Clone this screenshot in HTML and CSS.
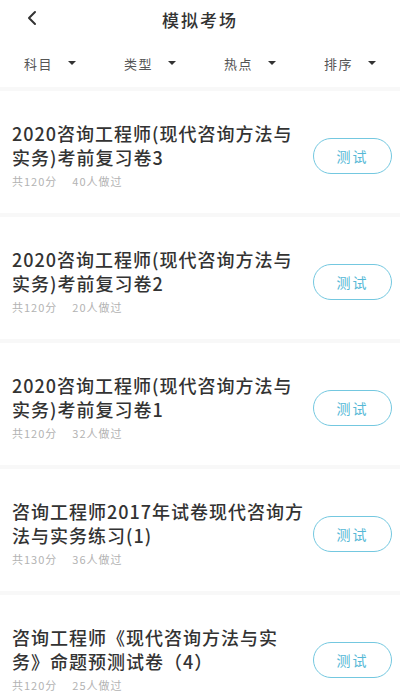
FILE: index.html
```html
<!DOCTYPE html>
<html lang="zh-CN">
<head>
  <meta charset="UTF-8" />
  <meta name="viewport" content="width=device-width, initial-scale=1.0"/>
  <title>模拟考场</title>
  <link rel="stylesheet" href="styles.css">
</head>
<body>
  <header class="topbar">
    <a class="back" href="#">
      <svg width="12" height="16" viewBox="0 0 12 16"><polyline points="9,2 3,8 9,14" fill="none" stroke="#333" stroke-width="2" stroke-linecap="round" stroke-linejoin="round"/></svg>
    </a>
    <h1>模拟考场</h1>
  </header>

  <nav class="filters">
    <div class="filter"><span>科目</span><i class="caret"></i></div>
    <div class="filter"><span>类型</span><i class="caret"></i></div>
    <div class="filter"><span>热点</span><i class="caret"></i></div>
    <div class="filter"><span>排序</span><i class="caret"></i></div>
  </nav>

  <ul class="list">
    <li class="item">
      <div class="info">
        <h2>2020咨询工程师(现代咨询方法与实务)考前复习卷3</h2>
        <p class="meta"><span>共120分</span><span>40人做过</span></p>
      </div>
      <button class="btn">测试</button>
    </li>
    <li class="item">
      <div class="info">
        <h2>2020咨询工程师(现代咨询方法与实务)考前复习卷2</h2>
        <p class="meta"><span>共120分</span><span>20人做过</span></p>
      </div>
      <button class="btn">测试</button>
    </li>
    <li class="item">
      <div class="info">
        <h2>2020咨询工程师(现代咨询方法与实务)考前复习卷1</h2>
        <p class="meta"><span>共120分</span><span>32人做过</span></p>
      </div>
      <button class="btn">测试</button>
    </li>
    <li class="item">
      <div class="info">
        <h2>咨询工程师2017年试卷现代咨询方法与实务练习(1)</h2>
        <p class="meta"><span>共130分</span><span>36人做过</span></p>
      </div>
      <button class="btn">测试</button>
    </li>
    <li class="item">
      <div class="info">
        <h2>咨询工程师《现代咨询方法与实务》命题预测试卷（4）</h2>
        <p class="meta"><span>共120分</span><span>25人做过</span></p>
      </div>
      <button class="btn">测试</button>
    </li>
  </ul>
</body>
</html>
```

FILE: styles.css
```css
body {
  font-family: "Noto Sans CJK SC", sans-serif;
  margin: 0;
  background: #fff;
  color: #333;
}

.topbar {
  height: 39px;
  display: flex;
  align-items: center;
  justify-content: center;
  position: relative;
}

.back {
  position: absolute;
  left: 26px;
  top: 10px;
  display: flex;
}

.topbar h1 {
  margin: 0;
  font-size: 17px;
  font-weight: 500;
  letter-spacing: 2px;
  color: #333;
}

.filters {
  height: 48px;
  display: grid;
  grid-template-columns: repeat(4, 1fr);
  border-bottom: 4px solid #f8f8f8;
}

.filter {
  display: flex;
  align-items: center;
  justify-content: center;
  font-size: 13px;
  letter-spacing: 1.5px;
  color: #555;
}

.caret {
  margin-left: 15px;
  width: 0;
  height: 0;
  border-left: 4px solid transparent;
  border-right: 4px solid transparent;
  border-top: 4px solid #333;
}

.list {
  list-style: none;
  margin: 0;
  padding: 0;
}

.item {
  height: 126px;
  box-sizing: border-box;
  padding: 30px 8px 25px 12px;
  display: flex;
  align-items: center;
  border-bottom: 4px solid #f8f8f8;
}

.info {
  flex: 1;
  margin-right: 7px;
  align-self: flex-start;
}

.info h2 {
  margin: 0;
  font-size: 18px;
  line-height: 24px;
  letter-spacing: 1px;
  font-weight: 500;
  color: #333;
}

.meta {
  margin: 5px 0 0;
  font-size: 11px;
  line-height: 14px;
  letter-spacing: 1px;
  color: #b3b3b3;
  display: flex;
  gap: 15px;
}

.btn {
  width: 79px;
  height: 36px;
  margin-top: 3px;
  border: 1.5px solid #74c8e0;
  border-radius: 18px;
  background: #fff;
  color: #55b8d6;
  font-family: inherit;
  font-size: 14px;
  letter-spacing: 2px;
  padding: 0;
  cursor: pointer;
}
```
